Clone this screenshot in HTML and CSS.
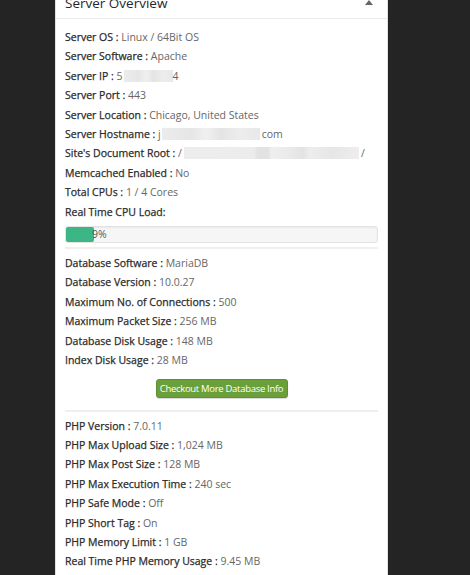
FILE: index.html
```html
<!DOCTYPE html>
<html>
<head>
<meta charset="utf-8">
<link rel="stylesheet" href="styles.css">
</head>
<body>
<div class="panel">
  <div class="hdr">
    <span class="title">Server Overview</span>
    <span class="toggle"></span>
  </div>
  <div class="body">
    <div class="row"><span class="k">Server OS :</span> <span class="v">Linux / 64Bit OS</span></div>
    <div class="row"><span class="k">Server Software :</span> <span class="v">Apache</span></div>
    <div class="row"><span class="k">Server IP :</span> <span class="v">5<span class="blur b-ip"></span>4</span></div>
    <div class="row"><span class="k">Server Port :</span> <span class="v">443</span></div>
    <div class="row"><span class="k">Server Location :</span> <span class="v">Chicago, United States</span></div>
    <div class="row"><span class="k">Server Hostname :</span> <span class="v">j<span class="blur b-host"></span>com</span></div>
    <div class="row"><span class="k">Site's Document Root :</span> <span class="v">/<span class="blur b-root"></span>/</span></div>
    <div class="row"><span class="k">Memcached Enabled :</span> <span class="v">No</span></div>
    <div class="row"><span class="k">Total CPUs :</span> <span class="v">1 / 4 Cores</span></div>
    <div class="row"><span class="k">Real Time CPU Load:</span></div>
    <div class="progress">
      <div class="fill" style="width: 9%"></div>
      <span class="pct">9%</span>
    </div>
    <div class="sep"></div>
    <div class="row"><span class="k">Database Software :</span> <span class="v">MariaDB</span></div>
    <div class="row"><span class="k">Database Version :</span> <span class="v">10.0.27</span></div>
    <div class="row"><span class="k">Maximum No. of Connections :</span> <span class="v">500</span></div>
    <div class="row"><span class="k">Maximum Packet Size :</span> <span class="v">256 MB</span></div>
    <div class="row"><span class="k">Database Disk Usage :</span> <span class="v">148 MB</span></div>
    <div class="row"><span class="k">Index Disk Usage :</span> <span class="v">28 MB</span></div>
    <div class="btn-wrap"><span class="btn">Checkout More Database Info</span></div>
    <div class="sep sep2"></div>
    <div class="row"><span class="k">PHP Version :</span> <span class="v">7.0.11</span></div>
    <div class="row"><span class="k">PHP Max Upload Size :</span> <span class="v">1,024 MB</span></div>
    <div class="row"><span class="k">PHP Max Post Size :</span> <span class="v">128 MB</span></div>
    <div class="row"><span class="k">PHP Max Execution Time :</span> <span class="v">240 sec</span></div>
    <div class="row"><span class="k">PHP Safe Mode :</span> <span class="v">Off</span></div>
    <div class="row"><span class="k">PHP Short Tag :</span> <span class="v">On</span></div>
    <div class="row"><span class="k">PHP Memory Limit :</span> <span class="v">1 GB</span></div>
    <div class="row"><span class="k">Real Time PHP Memory Usage :</span> <span class="v">9.45 MB</span></div>
  </div>
</div>
</body>
</html>
```
FILE: styles.css
```css
html, body {
  margin: 0;
  padding: 0;
  background: #242424;
  height: 100%;
  overflow: hidden;
}
body {
  font-family: "Open Sans", "Noto Sans", sans-serif;
}
.panel {
  margin: -12px 0 0 55px;
  width: 333px;
  box-sizing: border-box;
  background: #fff;
  border: 1px solid #e2e2e2;
  border-top: none;
  height: 620px;
}
.hdr {
  height: 31px;
  box-sizing: border-box;
  border-bottom: 1px solid #eaeaea;
  padding: 0 9px;
  display: flex;
  align-items: center;
  justify-content: space-between;
}
.title {
  font-size: 13.5px;
  color: #23282d;
  line-height: 30px;
}
.toggle {
  width: 0;
  height: 0;
  border-left: 4px solid transparent;
  border-right: 4px solid transparent;
  border-bottom: 5px solid #666;
  margin-right: 5px;
  margin-top: -2px;
}
.body {
  padding: 9px 9px 0 9px;
}
.row {
  font-size: 10.5px;
  line-height: 19.4px;
  white-space: nowrap;
}
.k {
  color: #2a2a2a;
  -webkit-text-stroke: 0.25px #2a2a2a;
}
.v {
  color: #666;
}
.blur {
  display: inline-block;
  height: 12px;
  vertical-align: -2px;
  background: linear-gradient(90deg, #ececec 0%, #e6e6e6 30%, #f0f0f0 45%, #e4e4e4 60%, #ededed 80%, #e8e8e8 100%);
}
.b-ip { width: 49px; margin-left: 1px; }
.b-host { width: 98px; margin-left: 1px; margin-right: 2px; }
.b-root { width: 175px; margin-left: 2px; margin-right: 2px;
  background: linear-gradient(90deg, #ededed 0%, #ececec 40%, #e2e2e2 42%, #e2e2e2 48%, #efefef 50%, #eaeaea 60%, #e3e3e3 68%, #ededed 72%, #e6e6e6 85%, #eeeeee 100%);
}
.progress {
  position: relative;
  margin-top: 4px;
  height: 17px;
  box-sizing: border-box;
  background: #f6f6f6;
  border: 1px solid #e4e4e4;
  border-radius: 3px;
  box-shadow: inset 0 1px 2px rgba(0,0,0,0.06);
}
.fill {
  height: 100%;
  background: #3cb684;
  border-radius: 2px;
}
.pct {
  position: absolute;
  left: 26px;
  top: 0;
  line-height: 15px;
  font-size: 10.5px;
  color: #555;
}
.sep {
  height: 0;
  border-top: 2px solid #efefef;
  margin: 4px 0 5px;
}
.btn-wrap {
  display: flex;
  justify-content: center;
  margin-top: 8px;
}
.btn {
  display: block;
  width: 132px;
  height: 19px;
  box-sizing: border-box;
  background: #6b9f3a;
  border: 1px solid #5f8f32;
  border-radius: 3px;
  color: #fff;
  font-size: 9.5px;
  letter-spacing: -0.3px;
  line-height: 17px;
  text-align: center;
  white-space: nowrap;
  box-shadow: 0 1px 1px rgba(0,0,0,0.15);
}
.sep2 {
  margin-top: 12px;
  margin-bottom: 5px;
}
```
